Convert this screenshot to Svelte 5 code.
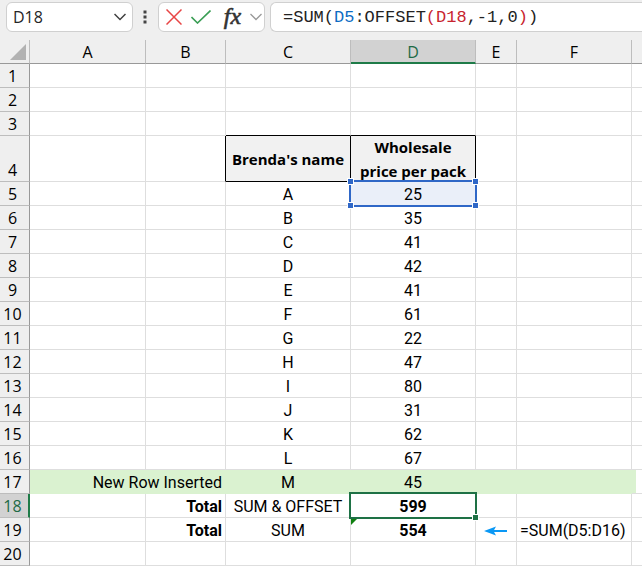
<script lang="ts">
  interface Row {
    n: number;
    b?: string;
    c?: string;
    d?: string;
    f?: string;
  }

  const columns = ["A", "B", "C", "D", "E", "F"];
  const prices = [25, 35, 41, 42, 41, 61, 22, 47, 80, 31, 62, 67];

  const rows: Row[] = [
    { n: 1 },
    { n: 2 },
    { n: 3 },
    { n: 4, c: "Brenda's name", d: "Wholesale price per pack" },
    ...prices.map((price, i) => ({
      n: i + 5,
      c: String.fromCharCode(65 + i),
      d: String(price),
    })),
    { n: 17, b: "New Row Inserted", c: "M", d: "45" },
    { n: 18, b: "Total", c: "SUM & OFFSET", d: "599" },
    { n: 19, b: "Total", c: "SUM", d: "554", f: "=SUM(D5:D16)" },
    { n: 20 },
  ];

  const activeColumn = "D";
  const activeRow = 18;
  let cellName = $state("D18");
</script>

<div class="workbook">
  <div class="formula-bar">
    <div class="name-box">
      <input type="text" aria-label="Name box" bind:value={cellName} />
      <button type="button" aria-label="Show names">
        <svg width="12" height="8" viewBox="0 0 12 8"><path d="M0.5 1 6 6.5 11.5 1" stroke="#404040" stroke-width="1.5" /></svg>
      </button>
    </div>
    <svg class="grip" width="4" height="14" viewBox="0 0 4 14" aria-hidden="true">
      <path d="M0.5 0.5h3v3h-3zM0.5 5.5h3v3h-3zM0.5 10.5h3v3h-3z" fill="#444" />
    </svg>
    <div class="actions">
      <button type="button" aria-label="Cancel">
        <svg width="16" height="16" viewBox="0 0 16 16"><path d="M0.5 0.5 15.5 15.5M15.5 0.5 0.5 15.5" stroke="#e84545" stroke-width="1.5" /></svg>
      </button>
      <button type="button" aria-label="Enter">
        <svg width="20" height="14" viewBox="0 0 20 14"><path d="M0.5 7 6.5 13 19.5 0.5" stroke="#3a9e55" stroke-width="1.6" /></svg>
      </button>
      <button type="button" class="fx" aria-label="Insert function">fx</button>
      <button type="button" aria-label="More functions">
        <svg width="12" height="8" viewBox="0 0 12 8"><path d="M0.5 1 6 6.5 11.5 1" stroke="#999" stroke-width="1.3" /></svg>
      </button>
    </div>
    <div class="formula" role="textbox" tabindex="0" contenteditable="true" aria-label="Formula bar">=SUM(<span class="ref-blue">D5</span>:OFFSET<span class="ref-red">(D18</span>,-1,0<span class="ref-red">)</span>)</div>
  </div>

  <table>
    <colgroup>
      <col class="w-head" />
      <col class="w-a" />
      <col class="w-b" />
      <col class="w-c" />
      <col class="w-d" />
      <col class="w-e" />
      <col class="w-f" />
      <col />
    </colgroup>
    <thead>
      <tr>
        <td class="corner">
          <svg width="16" height="16" viewBox="0 0 16 16" aria-hidden="true"><path d="M16 0v16H0z" fill="#b2b2b2" /></svg>
        </td>
        {#each columns as column}
          <th scope="col" class:active={column === activeColumn}>{column}</th>
        {/each}
        <td class="rest"></td>
      </tr>
    </thead>
    <tbody>
      {#each rows as row (row.n)}
        <tr
          class:heading={row.n === 4}
          class:above-heading={row.n === 3}
          class:inserted={row.n === 17}
          class:total={row.n === 18 || row.n === 19}
        >
          <th scope="row" class:active={row.n === activeRow}>{row.n}</th>
          <td></td>
          <td class="label">{row.b ?? ""}</td>
          <td class="name">{row.c ?? ""}</td>
          <td class="price" class:referenced={row.n === 5}>
            <div class="value">{row.d ?? ""}</div>
            {#if row.n === 5}
              <span class="range">
                <i class="handle tl"></i><i class="handle tr"></i>
                <i class="handle bl"></i><i class="handle br"></i>
              </span>
            {:else if row.n === activeRow}
              <span class="selection"><i class="handle br"></i></span>
            {:else if row.n === 19}
              <span class="warning"></span>
            {/if}
          </td>
          <td class="pointer">
            {#if row.f}
              <svg width="24" height="10" viewBox="0 0 24 10" aria-hidden="true">
                <path d="M0 5 12 0.5 9.5 5 12 9.5z" fill="#0a98f5" />
                <path d="M9 5h14" stroke="#0a98f5" stroke-width="2" />
              </svg>
            {/if}
          </td>
          <td class="note">{row.f ?? ""}</td>
          <td class="rest"></td>
        </tr>
      {/each}
    </tbody>
  </table>
</div>

<style>
  :global(body) {
    margin: 0;
  }

  .workbook {
    min-height: 100vh;
    background: #fff;
    color: #000;
    font-family: Roboto, "Liberation Sans", sans-serif;
    font-size: 16px;
  }

  .formula-bar {
    display: flex;
    align-items: center;
    height: 30px;
    padding: 2px 0 8px 6px;
    background: #efefef;
  }

  .name-box,
  .actions,
  .formula {
    box-sizing: border-box;
    display: flex;
    align-items: center;
    height: 30px;
    border: 1px solid #d0d0d0;
    border-radius: 6px;
    background: #fff;
  }

  .name-box {
    width: 127px;
    padding: 0 6px;
  }

  .name-box input {
    flex: 1;
    min-width: 0;
    padding: 0;
    border: 0;
    outline: 0;
    color: #262626;
    font: 16px "Open Sans", "Noto Sans", sans-serif;
  }

  button {
    display: flex;
    padding: 0;
    border: 0;
    background: none;
  }

  svg {
    display: block;
    fill: none;
  }

  .grip {
    margin: 0 11px 0 10px;
  }

  .actions {
    justify-content: space-between;
    width: 107px;
    padding: 0 2px 0 7px;
  }

  .actions .fx {
    padding: 0 0 3px 4px;
    color: #333;
    font: italic 24px/22px "Liberation Serif", serif;
    -webkit-text-stroke: 0.6px #333;
  }

  .formula {
    flex: 1;
    margin-left: 5px;
    padding: 0 12px;
    border-right: 0;
    border-radius: 6px 0 0 6px;
    outline: 0;
    color: #222;
    font-family: "Liberation Mono", monospace;
    font-size: 17px;
    white-space: pre;
  }

  .ref-blue {
    color: #0b6cc4;
  }

  .ref-red {
    color: #c8242f;
  }

  table {
    width: 100%;
    table-layout: fixed;
    border-collapse: separate;
    border-spacing: 0;
  }

  .w-head {
    width: 30px;
  }

  .w-a {
    width: 116px;
  }

  .w-b {
    width: 80px;
  }

  .w-c,
  .w-d {
    width: 125px;
  }

  .w-e {
    width: 41px;
  }

  .w-f {
    width: 115px;
  }

  th,
  td {
    position: relative;
    box-sizing: border-box;
    height: 24px;
    padding: 2px 0 0;
    border: 0 solid #dedede;
    border-width: 0 1px 1px 0;
    line-height: 21px;
    text-align: center;
    white-space: nowrap;
  }

  .rest {
    border-right: 0;
  }

  th {
    background: #efefef;
    font-family: "Open Sans", "Noto Sans", sans-serif;
    font-weight: 400;
  }

  thead th,
  thead td {
    border-color: #bdbdbd;
    border-bottom-color: #999;
    background: #efefef;
  }

  thead .active {
    border-bottom: 2px solid #1e7b48;
    background: #d2d2d2;
    color: #1e6b46;
    line-height: 20px;
  }

  .corner svg {
    margin: 2px 3px 3px auto;
  }

  tbody th {
    padding-right: 4px;
    border-color: #999;
    border-bottom-color: #bdbdbd;
    vertical-align: bottom;
  }

  tbody .active {
    padding-right: 3px;
    border-right: 2px solid #1e7b48;
    background: #d2d2d2;
    color: #1e6b46;
  }

  /* long labels spill over into column A */
  .label {
    padding-right: 4px;
    direction: rtl;
    text-align: start;
  }

  .heading th,
  .heading td {
    height: 46px;
  }

  .above-heading .name,
  .above-heading .price {
    border-bottom-color: #000;
  }

  .heading .label {
    border-right-color: #000;
  }

  .heading .name,
  .heading .price {
    border-color: #000;
    background: #f1f1f1;
    font-family: "Open Sans", "Noto Sans", sans-serif;
    font-size: 15px;
    font-weight: 700;
  }

  .heading .price {
    padding: 0 6px;
  }

  .heading .value {
    display: flex;
    align-items: center;
    height: 45px;
    line-height: 24px;
    white-space: normal;
  }

  .inserted td {
    border-color: #daf2d0;
    background: #daf2d0;
  }

  .inserted .rest {
    border-bottom-color: #dedede;
    background: linear-gradient(90deg, #daf2d0 4px, #fff 4px);
  }

  .total .label,
  .total .price {
    font-weight: 700;
  }

  .referenced {
    background: #eaeff9;
  }

  .range,
  .selection {
    position: absolute;
    z-index: 1;
    inset: -2px;
    border: 2px solid #2f67c7;
  }

  .selection {
    border-color: #1e7145;
  }

  .handle {
    position: absolute;
    width: 5px;
    height: 5px;
    border: 1px solid #fff;
    background: #2f67c7;
  }

  .selection .handle {
    background: #1e7145;
  }

  .tl,
  .tr {
    top: -4px;
  }

  .bl,
  .br {
    bottom: -4px;
  }

  .tl,
  .bl {
    left: -4px;
  }

  .tr,
  .br {
    right: -4px;
  }

  .warning {
    position: absolute;
    top: 1px;
    left: 0;
    border-top: 6px solid #108010;
    border-right: 6px solid transparent;
  }

  .pointer svg {
    margin: 0 auto;
  }

  .note {
    padding-left: 3px;
    text-align: left;
  }
</style>
